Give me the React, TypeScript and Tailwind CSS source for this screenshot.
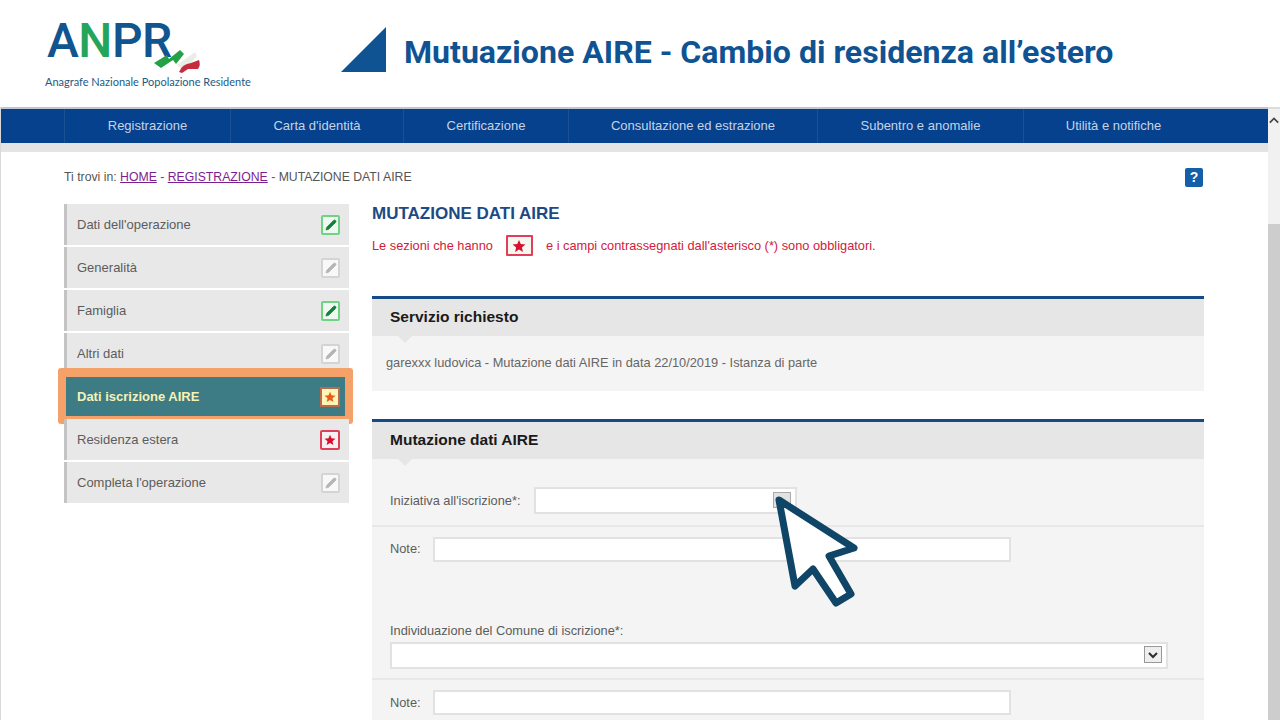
import { Pencil } from "lucide-react";

const navItems = [
    { label: "Registrazione", width: "w-[166px]" },
    { label: "Carta d'identità", width: "w-[173px]" },
    { label: "Certificazione", width: "w-[165px]" },
    { label: "Consultazione ed estrazione", width: "w-[249px]" },
    { label: "Subentro e anomalie", width: "w-[206px]" },
    { label: "Utilità e notifiche", width: "w-[180px]" },
];

const sideItems = [
    { label: "Dati dell'operazione", icon: "green" },
    { label: "Generalità", icon: "gray" },
    { label: "Famiglia", icon: "green" },
    { label: "Altri dati", icon: "gray" },
    { label: "Dati iscrizione AIRE", icon: "active" },
    { label: "Residenza estera", icon: "red" },
    { label: "Completa l'operazione", icon: "gray" },
];

function Star({ className }: { className: string }) {
    return (
        <svg viewBox="0 0 24 24" className={className} fill="currentColor">
            <path d="M12 1.500l3 7.200 8 .6-6.100 5.100 1.900 7.800-6.800-4.200-6.800 4.200 1.900-7.800L1 9.300l8-.6z" />
        </svg>
    );
}

function StatusIcon({ kind }: { kind: string }) {
    if (kind === "green") {
        return (
            <span className="flex h-[20px] w-[19px] items-center justify-center rounded-[2px] border-2 border-[#6fd383] bg-[#eef8f0]">
                <Pencil className="h-[12px] w-[12px] text-[#12813a]" fill="currentColor" strokeWidth={1.5} />
            </span>
        );
    }
    if (kind === "gray") {
        return (
            <span className="flex h-[20px] w-[19px] items-center justify-center rounded-[2px] border-2 border-[#d4d4d4] bg-[#f8f8f8]">
                <Pencil className="h-[12px] w-[12px] text-[#b5b5b5]" fill="currentColor" strokeWidth={1.5} />
            </span>
        );
    }
    if (kind === "red") {
        return (
            <span className="flex h-[20px] w-[20px] items-center justify-center rounded-[2px] border-2 border-[#dd4058] bg-[#f6f1f1]">
                <Star className="h-[12px] w-[12px] text-[#d90f2f]" />
            </span>
        );
    }
    return (
        <span className="flex h-[20px] w-[20px] items-center justify-center border-2 border-[#b96a50] bg-[#fdf7b5]">
            <Star className="h-[12px] w-[12px] text-[#ee5a1c]" />
        </span>
    );
}

function SideItem({ label, icon }: { label: string; icon: string }) {
    const active = icon === "active";
    return (
        <div
            className={`relative flex h-[41px] items-center justify-between border-l-[3px] pl-[10px] pr-[9px] text-[13px] ${
                active ? "border-[#3d7b85] bg-[#3d7b85] font-bold text-[#f5f3b4]" : "border-[#c4c4c4] bg-[#e8e8e8] text-[#5c5c5c]"
            }`}
        >
            {label}
            <StatusIcon kind={icon} />
            {active && (
                <div className="absolute -bottom-[7px] -left-[9px] -right-[4px] -top-[8px] rounded-[3px] border-x-[8px] border-b-[8px] border-t-[9px] border-[#f5a26a]" />
            )}
        </div>
    );
}

function Field({ width, tall }: { width: string; tall?: boolean }) {
    return <div className={`border-2 border-[#e2e2e2] bg-white ${tall ? "h-[27px]" : "h-[25px]"} ${width}`} />;
}

function SectionHead({ title }: { title: string }) {
    return (
        <div className="relative flex h-[40px] items-center border-t-[3px] border-[#144a86] bg-[#e6e6e6] pb-[2px] pl-[18px] text-[15.5px] font-bold text-[#1a1a1a]">
            {title}
            <div className="absolute -bottom-[7px] left-[26px] h-0 w-0 border-x-[7px] border-t-[7px] border-x-transparent border-t-[#e6e6e6]" />
        </div>
    );
}

export default function App() {
    return (
        <div className="relative h-[720px] w-[1280px] overflow-hidden bg-white font-['Liberation_Sans',sans-serif]">
            <header className="flex h-[107px] items-start bg-white">
                <div className="ml-[45px] w-[296px] pt-[15px]">
                    <div className="relative h-[51px] w-[210px] pl-[2px]">
                        <div className="flex font-['Roboto',sans-serif] text-[48px] font-medium leading-[51px] tracking-[-0.5px]">
                            <span className="text-[#10558f]">A</span>
                            <span className="text-[#25a45c]">N</span>
                            <span className="text-[#10558f]">PR</span>
                        </div>
                        <svg viewBox="0 0 48 24" className="absolute left-[108px] top-[35px] h-[24px] w-[48px]">
                            <path d="M1 13 L14 5 L16 9 L27 0 L31 4 L23 14 L20 10 L8 18Z" fill="#25a145" />
                            <path d="M24 15 L42 2 L44 6 L38 13 L28 19Z" fill="#e9ede6" />
                            <path d="M26 22 Q29 14 38 13 L46 10 Q48 15 45 19 L35 19 L29 23Z" fill="#c62b3d" />
                        </svg>
                    </div>
                    <div className="mt-[9px] font-['Lato',sans-serif] text-[11px] leading-[14px] text-[#1d5a86]">
                        Anagrafe Nazionale Popolazione Residente
                    </div>
                </div>
                <div className="flex items-start pt-[27px]">
                    <svg viewBox="0 0 45 45" className="h-[45px] w-[45px]">
                        <path d="M0 45 L45 0 L45 45Z" fill="#0f5392" />
                    </svg>
                    <h1 className="ml-[18px] font-['Roboto',sans-serif] text-[32.1px] font-bold leading-[51px] text-[#0f5392]">
                        Mutuazione AIRE - Cambio di residenza all’estero
                    </h1>
                </div>
            </header>

            <div className="flex">
                <div className="w-[1268px] border-l border-[#d9d9d9]">
                    <div className="h-[2px] bg-[#c3c6ce]" />
                    <nav className="flex h-[34px] items-center bg-[#05418d] pl-[63px]">
                        {navItems.map((item) => (
                            <div
                                key={item.label}
                                className={`flex h-full items-center justify-center border-l border-[#1a528f] text-[13px] text-[#c6d3e4] ${item.width}`}
                            >
                                {item.label}
                            </div>
                        ))}
                    </nav>
                    <div className="h-[9px] bg-[#e4e4e4]" />

                    <div className="pl-[63px] pr-[64px]">
                        <div className="flex h-[49px] items-center justify-between pt-[1px] text-[12.25px] text-[#555555]">
                            <div>
                                Ti trovi in: <span className="text-[#7c1e91] underline">HOME</span> -{" "}
                                <span className="text-[#7c1e91] underline">REGISTRAZIONE</span> - MUTAZIONE DATI AIRE
                            </div>
                            <span className="mr-[1px] flex h-[19px] w-[18px] items-center justify-center rounded-[2px] bg-[#155ea9] text-[14px] font-bold text-white">
                                ?
                            </span>
                        </div>

                        <div className="mt-[3px] flex">
                            <aside className="flex w-[285px] flex-col gap-[2px]">
                                {sideItems.map((item) => (
                                    <SideItem key={item.label} label={item.label} icon={item.icon} />
                                ))}
                            </aside>

                            <main className="ml-[23px] w-[832px]">
                                <h2 className="mt-[1px] text-[17px] font-bold leading-[18px] text-[#1d4a84]">MUTAZIONE DATI AIRE</h2>
                                <div className="mt-[12px] flex h-[21px] items-center text-[12.8px] text-[#d2203c]">
                                    Le sezioni che hanno
                                    <span className="ml-[13px] mr-[13px] flex h-[21px] w-[27px] items-center justify-center rounded-[1px] border-2 border-[#dd4058] bg-[#f5f7f1]">
                                        <Star className="h-[14px] w-[14px] text-[#d90f2f]" />
                                    </span>
                                    e i campi contrassegnati dall'asterisco (*) sono obbligatori.
                                </div>

                                <section className="mt-[40px]">
                                    <SectionHead title="Servizio richiesto" />
                                    <div className="flex h-[55px] items-center bg-[#f4f4f4] pb-[2px] pl-[14px] text-[12.8px] text-[#666666]">
                                        garexxx ludovica - Mutazione dati AIRE in data 22/10/2019 - Istanza di parte
                                    </div>
                                </section>

                                <section className="mt-[28px]">
                                    <SectionHead title="Mutazione dati AIRE" />
                                    <div className="bg-[#f4f4f4] text-[12.8px] text-[#5c5c5c]">
                                        <div className="flex h-[68px] items-start border-b-2 border-[#e8e8e8] pl-[18px] pt-[28px]">
                                            <span className="mt-[4px] w-[144px]">Iniziativa all'iscrizione*:</span>
                                            <div className="relative">
                                                <Field width="w-[263px]" tall />
                                                <span className="absolute right-[6px] top-[5px] h-[16px] w-[18px] border border-[#aaaaaa] bg-[#e2e2e2]" />
                                            </div>
                                        </div>
                                        <div className="h-[115px] pl-[18px] pt-[10px]">
                                            <div className="flex items-center">
                                                <span className="w-[43px] pb-[2px]">Note:</span>
                                                <Field width="w-[578px]" />
                                            </div>
                                            <div className="mt-[62px] leading-[14px]">Individuazione del Comune di iscrizione*:</div>
                                        </div>
                                        <div className="flex h-[38px] items-start border-b-2 border-[#e8e8e8] pl-[18px]">
                                            <div className="relative">
                                                <Field width="w-[778px]" tall />
                                                <span className="absolute right-[6px] top-[4px] flex h-[17px] w-[18px] items-center justify-center border border-[#999999] bg-[#eeeeee]">
                                                    <svg viewBox="0 0 12 12" className="h-[12px] w-[12px]" fill="none" stroke="#2c2c3a" strokeWidth="2">
                                                        <path d="M2 4l4 4 4-4" />
                                                    </svg>
                                                </span>
                                            </div>
                                        </div>
                                        <div className="flex h-[50px] items-start pl-[18px] pt-[10px]">
                                            <span className="mt-[3px] w-[43px]">Note:</span>
                                            <Field width="w-[578px]" />
                                        </div>
                                    </div>
                                </section>
                            </main>
                        </div>
                    </div>
                </div>

                <div className="relative w-[12px] border-t-[2px] border-[#dcdcdc] bg-[#f1f1f1]">
                    <svg viewBox="0 0 12 12" className="ml-[1px] mt-[7px] h-[10px] w-[10px]" fill="none" stroke="#444444" strokeWidth="2">
                        <path d="M1 8l5-5 5 5" />
                    </svg>
                    <div className="absolute bottom-0 left-0 right-0 top-[115px] bg-[#cdcdcd]" />
                </div>
            </div>

            <svg viewBox="0 0 95 125" className="absolute left-[770px] top-[490px] h-[125px] w-[95px]" fill="#ffffff" stroke="#0f4566" strokeWidth="7" strokeLinejoin="round">
                <path d="M9 10 L84 58 L59 66 L81 104 L66 113 L43 79 L25 96Z" />
            </svg>
        </div>
    );
}
